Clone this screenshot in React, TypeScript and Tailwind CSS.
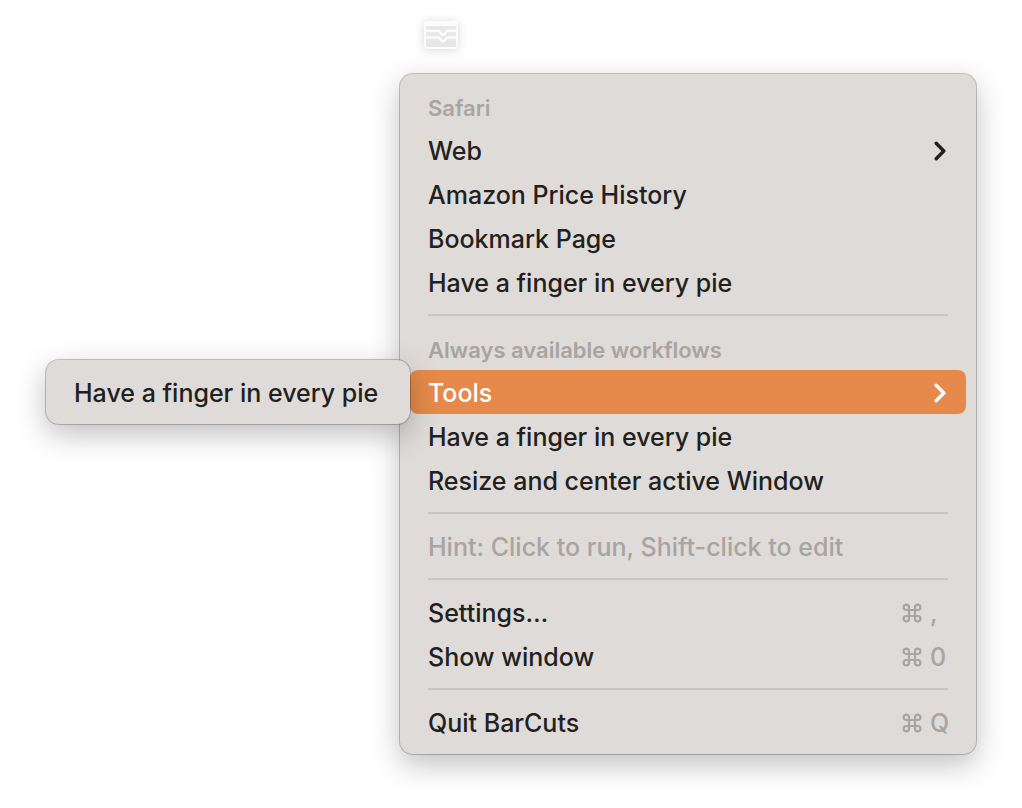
import type { ReactNode } from 'react';
import { clsx } from 'clsx';

function ChevronIcon() {
  return (
    <svg className="mr-[2px] h-[20px] w-[12px]" viewBox="0 0 12 20" fill="none" aria-hidden="true">
      <path
        d="M2.2 2.2 9.8 10 2.2 17.8"
        stroke="currentColor"
        strokeWidth="3.4"
        strokeLinecap="round"
        strokeLinejoin="round"
      />
    </svg>
  );
}

function CommandIcon() {
  return (
    <svg className="h-[20px] w-[20px]" viewBox="0 0 20 20" fill="none" aria-hidden="true">
      <path
        d="M7 7H4.300a2.700 2.700 0 1 1 2.700-2.700v11.400a2.700 2.700 0 1 1-2.700-2.700h11.400a2.700 2.700 0 1 1-2.700 2.700V4.300a2.700 2.700 0 1 1 2.700 2.700H7Z"
        stroke="currentColor"
        strokeWidth="2.2"
        strokeLinejoin="round"
      />
    </svg>
  );
}

function StatusIcon() {
  return (
    <svg className="h-[28px] w-[34px] drop-shadow-[0_1px_5px_rgba(0,0,0,0.16)]" viewBox="0 0 34 28" fill="none" aria-hidden="true">
      <rect width="34" height="28" rx="3" fill="#fcfcfc" />
      <rect x="2" y="5" width="30" height="21" rx="1" fill="#e7e7e7" />
      <path
        d="M2 10H14.500C16 10 17 14 19 14S22 10 23.500 10H32M2 16.500H14.500C16 16.500 17 20.500 19 20.500S22 16.500 23.500 16.500H32"
        stroke="#fcfcfc"
        strokeWidth="2.4"
      />
    </svg>
  );
}

type MenuItemProps = {
  label: string;
  shortcut?: string;
  hasSubmenu?: boolean;
  active?: boolean;
  disabled?: boolean;
};

function MenuItem({ label, shortcut, hasSubmenu, active, disabled }: MenuItemProps) {
  return (
    <button
      type="button"
      role="menuitem"
      disabled={disabled}
      aria-haspopup={hasSubmenu ? 'menu' : undefined}
      aria-expanded={hasSubmenu ? Boolean(active) : undefined}
      className={clsx(
        'flex h-11 w-full items-center justify-between rounded-lg px-[18px] pt-[2px] text-left whitespace-nowrap',
        active && 'bg-[#e58a4a] text-white',
        disabled && 'text-[#a8a4a1]',
      )}
    >
      <span className="pt-[2px]">{label}</span>
      {hasSubmenu && <ChevronIcon />}
      {shortcut && (
        <span className="flex items-center gap-2 text-[#a8a4a1]">
          <CommandIcon />
          <span className="w-[18px] pt-[2px]">{shortcut}</span>
        </span>
      )}
    </button>
  );
}

function MenuHeading({ children }: { children: ReactNode }) {
  return (
    <div className="flex h-11 items-center px-[18px] pt-1 text-[22px] font-semibold text-[#a8a4a1]">
      {children}
    </div>
  );
}

function Separator() {
  return (
    <div role="separator" className="px-[18px] py-[10px]">
      <div className="h-[2px] bg-[#c8c4c1]" />
    </div>
  );
}

function MenuPanel({ label, children }: { label: string; children: ReactNode }) {
  return (
    <div
      role="menu"
      aria-label={label}
      className="rounded-[13px] bg-[#dfdbd8] p-[10px] shadow-[0_0_0_1px_rgba(0,0,0,0.22),0_10px_30px_rgba(0,0,0,0.26)]"
    >
      {children}
    </div>
  );
}

export default function App() {
  return (
    <main className="min-h-screen bg-white pr-[46px] pb-[54px] pl-[400px] font-[Inter,'Liberation_Sans',sans-serif] text-[25px] font-[450] text-[#222120]">
      <div className="flex h-[74px] items-start pt-[21px] pl-6">
        <button type="button" aria-label="BarCuts">
          <StatusIcon />
        </button>
      </div>

      <MenuPanel label="BarCuts">
        <MenuHeading>Safari</MenuHeading>
        <MenuItem label="Web" hasSubmenu />
        <MenuItem label="Amazon Price History" />
        <MenuItem label="Bookmark Page" />
        <MenuItem label="Have a finger in every pie" />
        <Separator />
        <MenuHeading>Always available workflows</MenuHeading>
        <div className="relative">
          <MenuItem label="Tools" hasSubmenu active />
          {/* Submenu opens to the left of its row */}
          <div className="absolute -top-[10px] right-full min-w-[364px]">
            <MenuPanel label="Tools">
              <MenuItem label="Have a finger in every pie" />
            </MenuPanel>
          </div>
        </div>
        <MenuItem label="Have a finger in every pie" />
        <MenuItem label="Resize and center active Window" />
        <Separator />
        <MenuItem label="Hint: Click to run, Shift-click to edit" disabled />
        <Separator />
        <MenuItem label="Settings…" shortcut="," />
        <MenuItem label="Show window" shortcut="0" />
        <Separator />
        <MenuItem label="Quit BarCuts" shortcut="Q" />
      </MenuPanel>
    </main>
  );
}
